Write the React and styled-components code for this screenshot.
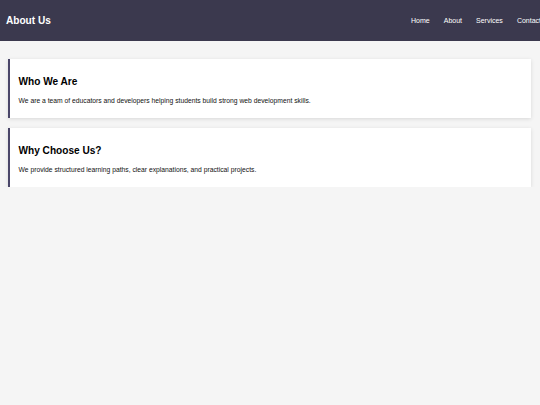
import React from "react";
import styled, { createGlobalStyle } from "styled-components";

const GlobalStyle = createGlobalStyle`
  html, body {
    margin: 0;
    padding: 0;
    background: #f5f5f5;
    font-family: "Liberation Sans", Arial, sans-serif;
    overflow: hidden;
  }
`;

const Header = styled.header`
  display: flex;
  align-items: center;
  justify-content: space-between;
  height: 41px;
  padding: 0 0 0 6px;
  background: #3b394e;
  color: #fff;
`;

const Title = styled.h1`
  margin: 0;
  font-size: 10.1px;
  font-weight: 700;
`;

const Nav = styled.nav`
  display: flex;
  gap: 14px;
  margin-right: -1px;
  flex-shrink: 0;
`;

const NavLink = styled.a`
  color: #fff;
  text-decoration: none;
  font-size: 7px;
`;

const Main = styled.main`
  display: flex;
  flex-direction: column;
  gap: 10px;
  padding: 18px 9px 0 8px;
`;

const Card = styled.section`
  background: #fff;
  border-left: 2.5px solid #4a4669;
  padding: 17px 8.5px 14px;
  box-shadow: 0 1px 4px rgba(0, 0, 0, 0.12);
`;

const Heading = styled.h2`
  margin: 0 0 10px;
  font-size: 10.1px;
  font-weight: 700;
  color: #000;
`;

const Text = styled.p`
  margin: 0;
  font-size: 6.75px;
  color: #111;
`;

const sections = [
  {
    title: "Who We Are",
    text: "We are a team of educators and developers helping students build strong web development skills.",
  },
  {
    title: "Why Choose Us?",
    text: "We provide structured learning paths, clear explanations, and practical projects.",
  },
];

const App = () => (
  <>
    <GlobalStyle />
    <Header>
      <Title>About Us</Title>
      <Nav>
        {["Home", "About", "Services", "Contact"].map((item) => (
          <NavLink key={item} href="#">
            {item}
          </NavLink>
        ))}
      </Nav>
    </Header>
    <Main>
      {sections.map((s) => (
        <Card key={s.title}>
          <Heading>{s.title}</Heading>
          <Text>{s.text}</Text>
        </Card>
      ))}
    </Main>
  </>
);

export default App;
